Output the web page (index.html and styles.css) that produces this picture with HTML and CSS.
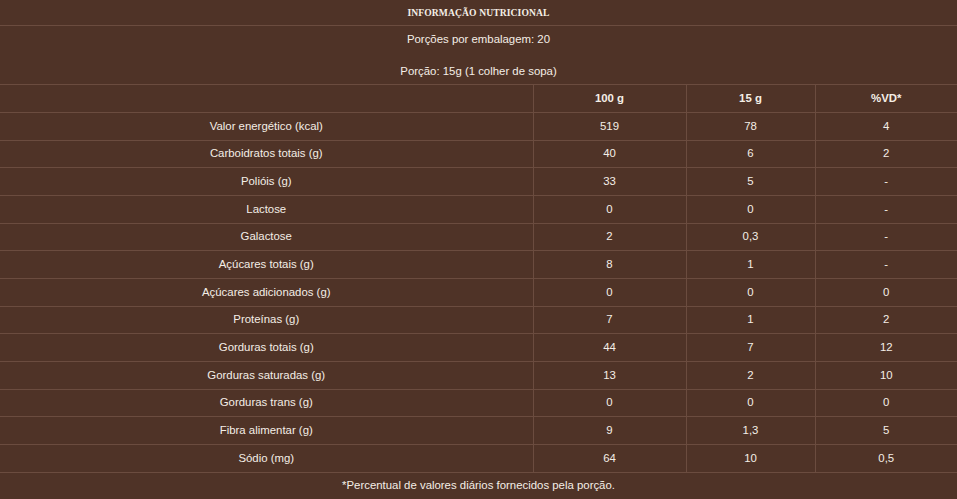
FILE: index.html
```html
<!DOCTYPE html>
<html lang="pt-BR">
<head>
<meta charset="utf-8">
<title>Informação Nutricional</title>
<link rel="stylesheet" href="styles.css">
</head>
<body>
<table class="nutri">
  <colgroup>
    <col class="c-name">
    <col class="c-100">
    <col class="c-15">
    <col class="c-vd">
  </colgroup>
  <thead>
    <tr class="r-title"><th colspan="4">INFORMAÇÃO NUTRICIONAL</th></tr>
    <tr class="r-info"><td colspan="4" class="info-cell">
      <div class="info-line">Porções por embalagem: 20</div>
      <div class="info-line">Porção: 15g (1 colher de sopa)</div>
    </td></tr>
    <tr class="r-head"><th></th><th>100 g</th><th>15 g</th><th>%VD*</th></tr>
  </thead>
  <tbody>
    <tr><td>Valor energético (kcal)</td><td>519</td><td>78</td><td>4</td></tr>
    <tr><td>Carboidratos totais (g)</td><td>40</td><td>6</td><td>2</td></tr>
    <tr><td>Polióis (g)</td><td>33</td><td>5</td><td>-</td></tr>
    <tr><td>Lactose</td><td>0</td><td>0</td><td>-</td></tr>
    <tr><td>Galactose</td><td>2</td><td>0,3</td><td>-</td></tr>
    <tr><td>Açúcares totais (g)</td><td>8</td><td>1</td><td>-</td></tr>
    <tr><td>Açúcares adicionados (g)</td><td>0</td><td>0</td><td>0</td></tr>
    <tr><td>Proteínas (g)</td><td>7</td><td>1</td><td>2</td></tr>
    <tr><td>Gorduras totais (g)</td><td>44</td><td>7</td><td>12</td></tr>
    <tr><td>Gorduras saturadas (g)</td><td>13</td><td>2</td><td>10</td></tr>
    <tr><td>Gorduras trans (g)</td><td>0</td><td>0</td><td>0</td></tr>
    <tr><td>Fibra alimentar (g)</td><td>9</td><td>1,3</td><td>5</td></tr>
    <tr><td>Sódio (mg)</td><td>64</td><td>10</td><td>0,5</td></tr>
  </tbody>
  <tfoot>
    <tr class="r-foot"><td colspan="4">*Percentual de valores diários fornecidos pela porção.</td></tr>
  </tfoot>
</table>
</body>
</html>
```
FILE: styles.css
```css
html, body {
  margin: 0;
  padding: 0;
  background: #4f3327;
}
body {
  font-family: "Liberation Sans", Arial, sans-serif;
  font-size: 11.4px;
  color: #f4eee6;
}
.nutri {
  width: 957px;
  border-collapse: collapse;
  table-layout: fixed;
}
.c-name { width: 533px; }
.c-100 { width: 153px; }
.c-15 { width: 129px; }
.c-vd { width: 142px; }

.nutri th,
.nutri td {
  text-align: center;
  padding: 0;
  line-height: 13px;
  border: 1px solid #6b4c3f;
}
.nutri th { font-weight: bold; }
.nutri tr > :first-child { border-left: none; }
.nutri tr > :last-child { border-right: none; }

.r-title th {
  border-top: none;
  height: 25px;
  font-family: "Liberation Serif", "Times New Roman", serif;
  font-size: 9.6px;
  letter-spacing: 0.1px;
}
.info-cell { height: 58px; }
.info-line { height: 29px; line-height: 29px; }
.info-line:first-child { line-height: 27px; }
.info-line:last-child { line-height: 33px; }
.r-head th { height: 27px; }
.nutri tbody td { height: 26.67px; }
.r-foot td {
  height: 26px;
  border-bottom: none;
}
```
